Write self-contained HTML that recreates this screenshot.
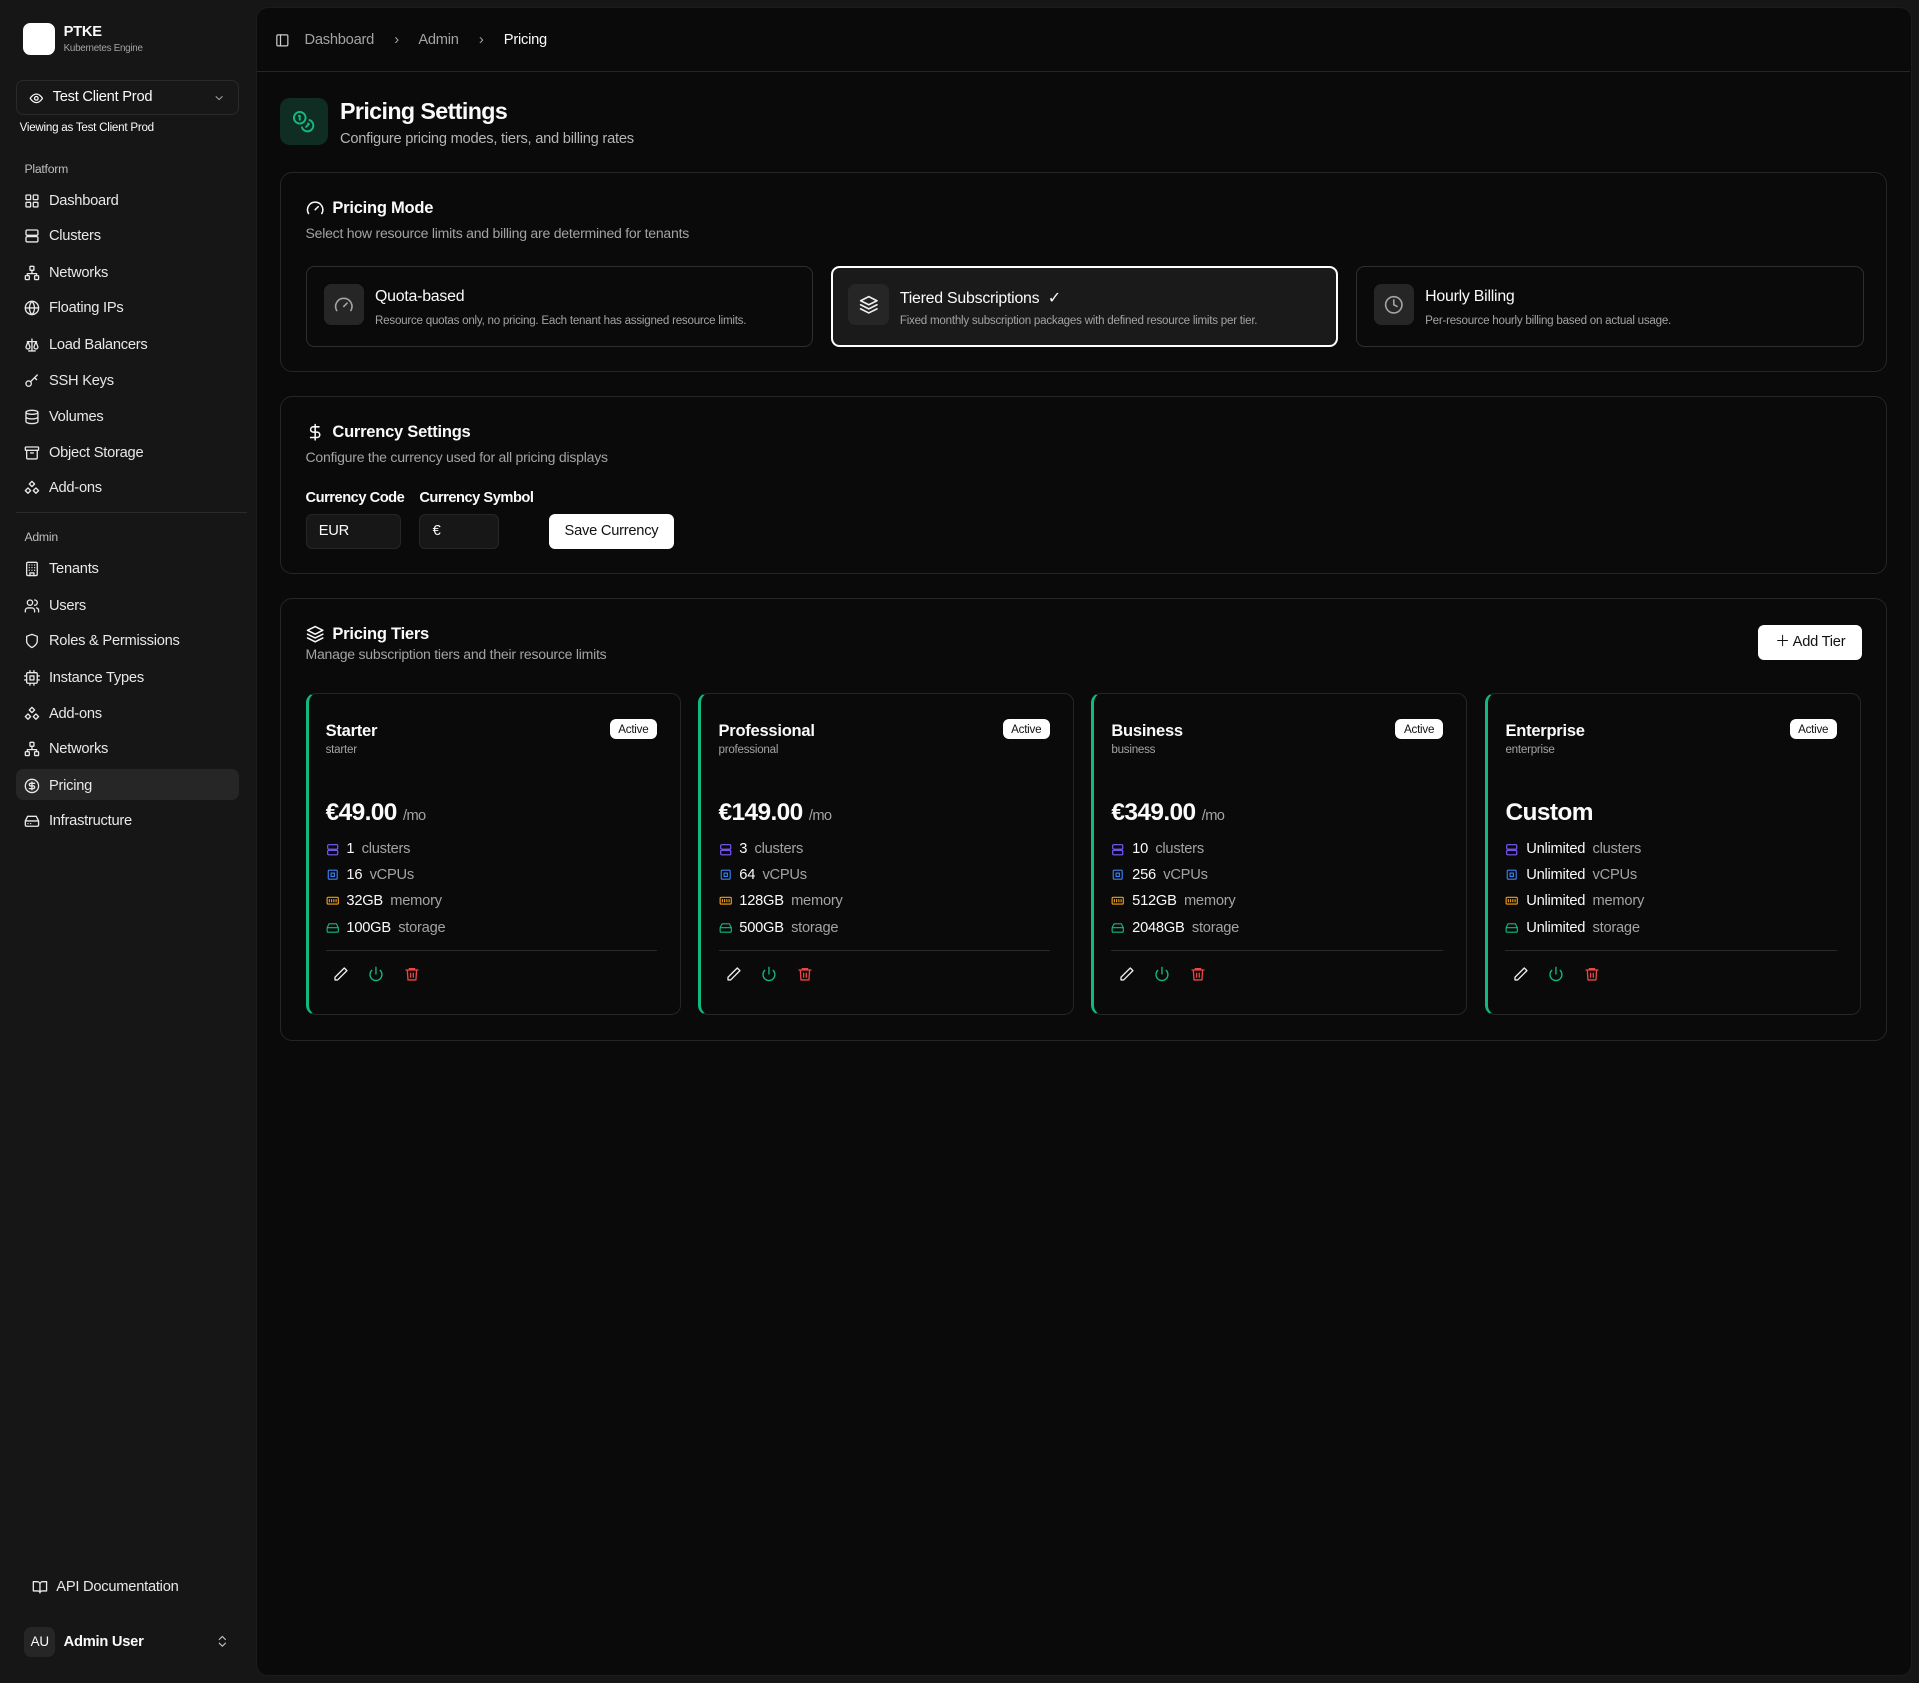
<!DOCTYPE html>
<html><head><meta charset="utf-8"><style>
*{box-sizing:border-box;margin:0;padding:0}
html,body{background:#161616;width:1919px;height:1683px;overflow:hidden}
#w{zoom:1.2239;width:1568px;height:1375px;position:relative;font-family:"Liberation Sans",sans-serif;color:#fafafa;letter-spacing:-0.2px}
.a{position:absolute}
svg{fill:none;stroke:currentColor;stroke-width:2;stroke-linecap:round;stroke-linejoin:round}
.nav{position:absolute;left:20px;font-size:12px;color:#e8e8e8;display:flex;align-items:center;gap:7px;height:16px}
.nav svg{width:13px;height:13px}
.main{position:absolute;left:209px;top:6px;width:1353px;height:1363px;background:#0a0a0a;border-radius:10px;border:1px solid #1c1c1c}
.card{position:absolute;left:19px;width:1313px;border:1px solid #262626;border-radius:10px;background:#0a0a0a}
.h{font-size:13.5px;font-weight:bold;display:flex;align-items:center;gap:7px}
.h svg{width:15px;height:15px}
.sub{font-size:11.5px;color:#a3a3a3}
.opt{position:absolute;top:76px;width:415px;height:66px;border:1.5px solid #2e2e2e;border-radius:7px}
.opt .ic{position:absolute;left:14px;top:14px;width:33px;height:33px;background:#262626;border-radius:6px;display:flex;align-items:center;justify-content:center;color:#a3a3a3}
.opt .ic svg{width:16px;height:16px}
.opt .t{position:absolute;left:56px;top:17px;font-size:13px}
.opt .d{position:absolute;left:56px;top:38px;font-size:9.5px;color:#a3a3a3}
.tier{position:absolute;top:77px;width:307px;height:263px;border:1px solid #262626;border-left:3px solid #10b981;border-radius:8px;background:#0a0a0a}
.tier .n{position:absolute;left:14px;top:22px;font-size:13.5px;font-weight:bold}
.tier .s{position:absolute;left:14px;top:40px;font-size:9.5px;color:#a3a3a3}
.tier .b{position:absolute;right:19px;top:20px;background:#fff;color:#111;font-size:9.5px;padding:3px 7px;border-radius:5px}
.tier .p{position:absolute;left:14px;top:85px;font-size:20px;font-weight:bold;letter-spacing:-0.5px}
.tier .p span{font-size:12px;font-weight:normal;color:#a3a3a3}
.tier .sp{position:absolute;left:14px;font-size:12px;display:flex;align-items:center;gap:6px}
.tier .sp svg{width:11px;height:11px}
.tier .sp i{font-style:normal;color:#a3a3a3}
.tier .dv{position:absolute;left:14px;right:19px;top:209px;border-top:1px solid #2a2a2a}
.tier .ac{position:absolute;left:20px;top:222px;display:flex;gap:16px}
.tier .ac svg{width:13px;height:13px}
</style></head><body><div id="w">
<div class="a" style="left:19px;top:19px;width:26px;height:26px;background:#fff;border-radius:6px"></div>
<div class="a" style="left:52px;top:20px;font-size:12px;font-weight:bold">PTKE</div>
<div class="a" style="left:52px;top:35px;font-size:8px;color:#a3a3a3">Kubernetes Engine</div>
<div class="a" style="left:13px;top:65px;width:182px;height:29px;border:1px solid #2a2a2a;border-radius:6px;background:#171717"></div>
<svg class="a" style="left:24px;top:74px;width:12px;height:12px" viewBox="0 0 24 24"><path d="M2 12s4-7 10-7 10 7 10 7-4 7-10 7S2 12 2 12z"/><circle cx="12" cy="12" r="3"/></svg>
<div class="a" style="left:43px;top:73px;font-size:12px">Test Client Prod</div>
<svg class="a" style="left:174px;top:75px;width:10px;height:10px;color:#a3a3a3" viewBox="0 0 24 24"><path d="M6 9l6 6 6-6"/></svg>
<div class="a" style="left:16px;top:99px;font-size:9.5px">Viewing as Test Client Prod</div>
<div class="a" style="left:20px;top:132px;font-size:10px;color:#bdbdbd">Platform</div>
<div class="nav" style="top:156px"><svg viewBox="0 0 24 24"><rect x="3" y="3" width="7" height="7" rx="1"/><rect x="14" y="3" width="7" height="7" rx="1"/><rect x="3" y="14" width="7" height="7" rx="1"/><rect x="14" y="14" width="7" height="7" rx="1"/></svg>Dashboard</div>
<div class="nav" style="top:185px"><svg viewBox="0 0 24 24"><rect x="3" y="3" width="18" height="8" rx="2"/><rect x="3" y="13" width="18" height="8" rx="2"/></svg>Clusters</div>
<div class="nav" style="top:215px"><svg viewBox="0 0 24 24"><rect x="9" y="2" width="6" height="6" rx="1"/><rect x="2" y="16" width="6" height="6" rx="1"/><rect x="16" y="16" width="6" height="6" rx="1"/><path d="M5 16v-3h14v3M12 8v5"/></svg>Networks</div>
<div class="nav" style="top:244px"><svg viewBox="0 0 24 24"><circle cx="12" cy="12" r="10"/><path d="M2 12h20M12 2a15 15 0 010 20M12 2a15 15 0 000 20"/></svg>Floating IPs</div>
<div class="nav" style="top:274px"><svg viewBox="0 0 24 24"><path d="M12 3v18M5 7h14M3 15l3-8 3 8a3 3 0 01-6 0zM15 15l3-8 3 8a3 3 0 01-6 0zM7 21h10"/></svg>Load Balancers</div>
<div class="nav" style="top:303px"><svg viewBox="0 0 24 24"><circle cx="7" cy="16" r="4"/><path d="M10 13l10-10M16 7l3 3"/></svg>SSH Keys</div>
<div class="nav" style="top:333px"><svg viewBox="0 0 24 24"><ellipse cx="12" cy="5" rx="9" ry="3"/><path d="M3 5v14c0 1.7 4 3 9 3s9-1.3 9-3V5M3 12c0 1.7 4 3 9 3s9-1.3 9-3"/></svg>Volumes</div>
<div class="nav" style="top:362px"><svg viewBox="0 0 24 24"><rect x="2" y="3" width="20" height="5" rx="1"/><path d="M4 8v11a2 2 0 002 2h12a2 2 0 002-2V8M10 12h4"/></svg>Object Storage</div>
<div class="nav" style="top:391px"><svg viewBox="0 0 24 24"><path d="M12 2l4 4-4 4-4-4zM6 12l4 4-4 4-4-4zM18 12l4 4-4 4-4-4z"/></svg>Add-ons</div>
<div class="a" style="left:13px;top:418px;width:189px;border-top:1px solid #2a2a2a"></div>
<div class="a" style="left:20px;top:433px;font-size:10px;color:#bdbdbd">Admin</div>
<div class="nav" style="top:457px"><svg viewBox="0 0 24 24"><rect x="4" y="2" width="16" height="20" rx="2"/><path d="M9 22v-4h6v4M8 6h.01M12 6h.01M16 6h.01M8 10h.01M12 10h.01M16 10h.01M8 14h.01M12 14h.01M16 14h.01"/></svg>Tenants</div>
<div class="nav" style="top:487px"><svg viewBox="0 0 24 24"><circle cx="9" cy="7" r="4"/><path d="M2 21v-2a4 4 0 014-4h6a4 4 0 014 4v2M16 3a4 4 0 010 8M22 21v-2a4 4 0 00-3-4"/></svg>Users</div>
<div class="nav" style="top:516px"><svg viewBox="0 0 24 24"><path d="M12 22s8-4 8-10V5l-8-3-8 3v7c0 6 8 10 8 10z"/></svg>Roles &amp; Permissions</div>
<div class="nav" style="top:546px"><svg viewBox="0 0 24 24"><rect x="4" y="4" width="16" height="16" rx="2"/><rect x="9" y="9" width="6" height="6"/><path d="M9 1v3M15 1v3M9 20v3M15 20v3M1 9h3M1 15h3M20 9h3M20 15h3"/></svg>Instance Types</div>
<div class="nav" style="top:575px"><svg viewBox="0 0 24 24"><path d="M12 2l4 4-4 4-4-4zM6 12l4 4-4 4-4-4zM18 12l4 4-4 4-4-4z"/></svg>Add-ons</div>
<div class="nav" style="top:604px"><svg viewBox="0 0 24 24"><rect x="9" y="2" width="6" height="6" rx="1"/><rect x="2" y="16" width="6" height="6" rx="1"/><rect x="16" y="16" width="6" height="6" rx="1"/><path d="M5 16v-3h14v3M12 8v5"/></svg>Networks</div>
<div class="a" style="left:13px;top:628px;width:182px;height:26px;background:#262626;border-radius:6px"></div>
<div class="nav" style="top:634px"><svg viewBox="0 0 24 24"><circle cx="12" cy="12" r="10"/><path d="M16 8h-6a2 2 0 000 4h4a2 2 0 010 4H8M12 18V6"/></svg>Pricing</div>
<div class="nav" style="top:663px"><svg viewBox="0 0 24 24"><path d="M22 12H2M5.5 5h13L22 12v6a2 2 0 01-2 2H4a2 2 0 01-2-2v-6zM6 16h.01M10 16h.01"/></svg>Infrastructure</div>
<div class="nav" style="left:26px;top:1289px"><svg viewBox="0 0 24 24"><path d="M2 4h6a4 4 0 014 4v13a3 3 0 00-3-3H2zM22 4h-6a4 4 0 00-4 4v13a3 3 0 013-3h7z"/></svg>API Documentation</div>
<div class="a" style="left:20px;top:1329px;width:25px;height:25px;background:#262626;border-radius:6px;font-size:11px;display:flex;align-items:center;justify-content:center">AU</div>
<div class="a" style="left:52px;top:1335px;font-size:12px;font-weight:bold">Admin User</div>
<svg class="a" style="left:176px;top:1335px;width:12px;height:12px;color:#bbb" viewBox="0 0 24 24"><path d="M7 9l5-5 5 5M7 15l5 5 5-5"/></svg>

<div class="main">
 <svg class="a" style="left:15px;top:20px;width:12px;height:12px;color:#ccc" viewBox="0 0 24 24"><rect x="3" y="3" width="18" height="18" rx="2"/><path d="M9 3v18"/></svg>
 <div class="a" style="left:39px;top:19px;font-size:12px;color:#a3a3a3;word-spacing:1px">Dashboard &nbsp;&nbsp;&nbsp;›&nbsp;&nbsp;&nbsp; Admin &nbsp;&nbsp;&nbsp;›&nbsp;&nbsp;&nbsp; <span style="color:#fafafa">Pricing</span></div>
 <div class="a" style="left:0;top:51px;width:1351px;border-top:1px solid #262626"></div>
 <div class="a" style="left:19px;top:73px;width:39px;height:39px;background:#0f2d22;border-radius:8px;color:#10b981;display:flex;align-items:center;justify-content:center"><svg style="width:19px;height:19px" viewBox="0 0 24 24"><circle cx="8" cy="8" r="6"/><path d="M18.1 10.4A6 6 0 1110.3 18M7 6h1v4M16.7 13.9l.7.7-2.8 2.8"/></svg></div>
 <div class="a" style="left:68px;top:73px;font-size:19px;font-weight:bold;letter-spacing:-0.5px">Pricing Settings</div>
 <div class="a" style="left:68px;top:100px;font-size:12px;color:#b5b5b5">Configure pricing modes, tiers, and billing rates</div>

 <div class="card" style="top:134px;height:163px">
  <div class="a h" style="left:20px;top:20px"><svg viewBox="0 0 24 24"><path d="M12 14l4-4M3.3 19a10 10 0 1117.4 0"/></svg>Pricing Mode</div>
  <div class="a sub" style="left:20px;top:42px">Select how resource limits and billing are determined for tenants</div>
  <div class="opt" style="left:20px"><div class="ic"><svg viewBox="0 0 24 24"><path d="M12 14l4-4M3.3 19a10 10 0 1117.4 0"/></svg></div><div class="t">Quota-based</div><div class="d">Resource quotas only, no pricing. Each tenant has assigned resource limits.</div></div>
  <div class="opt" style="left:449px;border:2px solid #fff;background:#1a1a1a"><div class="ic" style="color:#eee;left:13px;top:13px"><svg viewBox="0 0 24 24"><path d="M12 2l10 5-10 5L2 7zM2 12l10 5 10-5M2 17l10 5 10-5"/></svg></div><div class="t" style="left:55px;top:16px">Tiered Subscriptions &nbsp;✓</div><div class="d" style="left:55px;top:37px">Fixed monthly subscription packages with defined resource limits per tier.</div></div>
  <div class="opt" style="left:878px"><div class="ic"><svg viewBox="0 0 24 24"><circle cx="12" cy="12" r="10"/><path d="M12 6v6l4 2"/></svg></div><div class="t">Hourly Billing</div><div class="d">Per-resource hourly billing based on actual usage.</div></div>
 </div>

 <div class="card" style="top:317px;height:145px">
  <div class="a h" style="left:20px;top:20px"><svg viewBox="0 0 24 24"><path d="M12 2v20M17 5H9.5a3.5 3.5 0 000 7h5a3.5 3.5 0 010 7H6"/></svg>Currency Settings</div>
  <div class="a sub" style="left:20px;top:42px">Configure the currency used for all pricing displays</div>
  <div class="a" style="left:20px;top:76px;font-size:12px;font-weight:bold;letter-spacing:-0.4px">Currency Code</div>
  <div class="a" style="left:113px;top:76px;font-size:12px;font-weight:bold;letter-spacing:-0.4px">Currency Symbol</div>
  <div class="a" style="left:20px;top:95px;width:78px;height:29px;background:#171717;border:1px solid #262626;border-radius:5px;font-size:12px;padding:7px 10px">EUR</div>
  <div class="a" style="left:113px;top:95px;width:65px;height:29px;background:#171717;border:1px solid #262626;border-radius:5px;font-size:12px;padding:7px 10px">€</div>
  <div class="a" style="left:219px;top:95px;width:102px;height:29px;background:#fff;color:#111;border-radius:5px;font-size:12px;text-align:center;line-height:29px">Save Currency</div>
 </div>

 <div class="card" style="top:482px;height:362px">
  <div class="a h" style="left:20px;top:20px"><svg viewBox="0 0 24 24"><path d="M12 2l10 5-10 5L2 7zM2 12l10 5 10-5M2 17l10 5 10-5"/></svg>Pricing Tiers</div>
  <div class="a sub" style="left:20px;top:38px">Manage subscription tiers and their resource limits</div>
  <div class="a" style="left:1207px;top:21px;width:85px;height:29px;background:#fff;color:#111;border-radius:5px;font-size:12px;line-height:29px;text-align:center">＋ Add Tier</div>

  <div class="tier" style="left:20px"><div class="n">Starter</div><div class="s">starter</div><div class="b">Active</div><div class="p">€49.00 <span>/mo</span></div>
   <div class="sp" style="top:120px"><svg viewBox="0 0 24 24" style="color:#7c5cff"><rect x="3" y="3" width="18" height="8" rx="2"/><rect x="3" y="13" width="18" height="8" rx="2"/></svg>1 <i>clusters</i></div>
   <div class="sp" style="top:141px"><svg viewBox="0 0 24 24" style="color:#3b82f6"><rect x="4" y="4" width="16" height="16" rx="2"/><rect x="9" y="9" width="6" height="6"/></svg>16 <i>vCPUs</i></div>
   <div class="sp" style="top:162px"><svg viewBox="0 0 24 24" style="color:#f59e0b"><rect x="2" y="6" width="20" height="12" rx="2"/><path d="M6 10v4M10 10v4M14 10v4M18 10v4"/></svg>32GB <i>memory</i></div>
   <div class="sp" style="top:184px"><svg viewBox="0 0 24 24" style="color:#10b981"><path d="M22 12H2M5.5 5h13L22 12v6a2 2 0 01-2 2H4a2 2 0 01-2-2v-6z"/></svg>100GB <i>storage</i></div>
   <div class="dv"></div><div class="ac"><svg viewBox="0 0 24 24" style="color:#eee"><path d="M17 3l4 4L7 21H3v-4z"/></svg><svg viewBox="0 0 24 24" style="color:#10b981"><path d="M12 2v10M18.4 6.6a9 9 0 11-12.8 0"/></svg><svg viewBox="0 0 24 24" style="color:#ef4444"><path d="M3 6h18M8 6V4h8v2M5 6l1 15h12l1-15M10 11v6M14 11v6"/></svg></div></div>

  <div class="tier" style="left:341px"><div class="n">Professional</div><div class="s">professional</div><div class="b">Active</div><div class="p">€149.00 <span>/mo</span></div>
   <div class="sp" style="top:120px"><svg viewBox="0 0 24 24" style="color:#7c5cff"><rect x="3" y="3" width="18" height="8" rx="2"/><rect x="3" y="13" width="18" height="8" rx="2"/></svg>3 <i>clusters</i></div>
   <div class="sp" style="top:141px"><svg viewBox="0 0 24 24" style="color:#3b82f6"><rect x="4" y="4" width="16" height="16" rx="2"/><rect x="9" y="9" width="6" height="6"/></svg>64 <i>vCPUs</i></div>
   <div class="sp" style="top:162px"><svg viewBox="0 0 24 24" style="color:#f59e0b"><rect x="2" y="6" width="20" height="12" rx="2"/><path d="M6 10v4M10 10v4M14 10v4M18 10v4"/></svg>128GB <i>memory</i></div>
   <div class="sp" style="top:184px"><svg viewBox="0 0 24 24" style="color:#10b981"><path d="M22 12H2M5.5 5h13L22 12v6a2 2 0 01-2 2H4a2 2 0 01-2-2v-6z"/></svg>500GB <i>storage</i></div>
   <div class="dv"></div><div class="ac"><svg viewBox="0 0 24 24" style="color:#eee"><path d="M17 3l4 4L7 21H3v-4z"/></svg><svg viewBox="0 0 24 24" style="color:#10b981"><path d="M12 2v10M18.4 6.6a9 9 0 11-12.8 0"/></svg><svg viewBox="0 0 24 24" style="color:#ef4444"><path d="M3 6h18M8 6V4h8v2M5 6l1 15h12l1-15M10 11v6M14 11v6"/></svg></div></div>

  <div class="tier" style="left:662px"><div class="n">Business</div><div class="s">business</div><div class="b">Active</div><div class="p">€349.00 <span>/mo</span></div>
   <div class="sp" style="top:120px"><svg viewBox="0 0 24 24" style="color:#7c5cff"><rect x="3" y="3" width="18" height="8" rx="2"/><rect x="3" y="13" width="18" height="8" rx="2"/></svg>10 <i>clusters</i></div>
   <div class="sp" style="top:141px"><svg viewBox="0 0 24 24" style="color:#3b82f6"><rect x="4" y="4" width="16" height="16" rx="2"/><rect x="9" y="9" width="6" height="6"/></svg>256 <i>vCPUs</i></div>
   <div class="sp" style="top:162px"><svg viewBox="0 0 24 24" style="color:#f59e0b"><rect x="2" y="6" width="20" height="12" rx="2"/><path d="M6 10v4M10 10v4M14 10v4M18 10v4"/></svg>512GB <i>memory</i></div>
   <div class="sp" style="top:184px"><svg viewBox="0 0 24 24" style="color:#10b981"><path d="M22 12H2M5.5 5h13L22 12v6a2 2 0 01-2 2H4a2 2 0 01-2-2v-6z"/></svg>2048GB <i>storage</i></div>
   <div class="dv"></div><div class="ac"><svg viewBox="0 0 24 24" style="color:#eee"><path d="M17 3l4 4L7 21H3v-4z"/></svg><svg viewBox="0 0 24 24" style="color:#10b981"><path d="M12 2v10M18.4 6.6a9 9 0 11-12.8 0"/></svg><svg viewBox="0 0 24 24" style="color:#ef4444"><path d="M3 6h18M8 6V4h8v2M5 6l1 15h12l1-15M10 11v6M14 11v6"/></svg></div></div>

  <div class="tier" style="left:984px"><div class="n">Enterprise</div><div class="s">enterprise</div><div class="b">Active</div><div class="p">Custom</div>
   <div class="sp" style="top:120px"><svg viewBox="0 0 24 24" style="color:#7c5cff"><rect x="3" y="3" width="18" height="8" rx="2"/><rect x="3" y="13" width="18" height="8" rx="2"/></svg>Unlimited <i>clusters</i></div>
   <div class="sp" style="top:141px"><svg viewBox="0 0 24 24" style="color:#3b82f6"><rect x="4" y="4" width="16" height="16" rx="2"/><rect x="9" y="9" width="6" height="6"/></svg>Unlimited <i>vCPUs</i></div>
   <div class="sp" style="top:162px"><svg viewBox="0 0 24 24" style="color:#f59e0b"><rect x="2" y="6" width="20" height="12" rx="2"/><path d="M6 10v4M10 10v4M14 10v4M18 10v4"/></svg>Unlimited <i>memory</i></div>
   <div class="sp" style="top:184px"><svg viewBox="0 0 24 24" style="color:#10b981"><path d="M22 12H2M5.5 5h13L22 12v6a2 2 0 01-2 2H4a2 2 0 01-2-2v-6z"/></svg>Unlimited <i>storage</i></div>
   <div class="dv"></div><div class="ac"><svg viewBox="0 0 24 24" style="color:#eee"><path d="M17 3l4 4L7 21H3v-4z"/></svg><svg viewBox="0 0 24 24" style="color:#10b981"><path d="M12 2v10M18.4 6.6a9 9 0 11-12.8 0"/></svg><svg viewBox="0 0 24 24" style="color:#ef4444"><path d="M3 6h18M8 6V4h8v2M5 6l1 15h12l1-15M10 11v6M14 11v6"/></svg></div></div>
 </div>
</div>
</div></body></html>
